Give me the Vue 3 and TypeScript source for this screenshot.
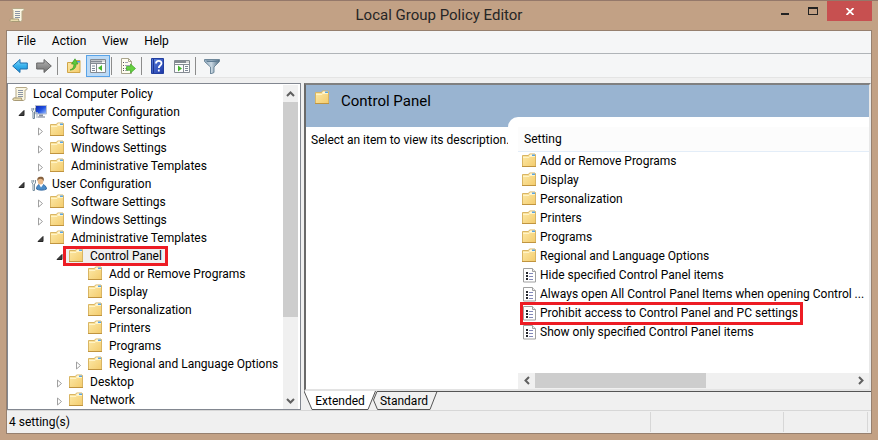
<script setup lang="ts">
import { ref } from 'vue'

interface TreeNode {
  label: string
  level: number
  icon: 'scroll' | 'computer' | 'user' | 'folder'
  state?: 'open' | 'closed'
  marked?: boolean
}

interface Setting {
  label: string
  icon: 'folder' | 'policy'
  marked?: boolean
}

const menus: string[] = ['File', 'Action', 'View', 'Help']

const nodes: TreeNode[] = [
  { label: 'Local Computer Policy', level: 0, icon: 'scroll' },
  { label: 'Computer Configuration', level: 1, icon: 'computer', state: 'open' },
  { label: 'Software Settings', level: 2, icon: 'folder', state: 'closed' },
  { label: 'Windows Settings', level: 2, icon: 'folder', state: 'closed' },
  { label: 'Administrative Templates', level: 2, icon: 'folder', state: 'closed' },
  { label: 'User Configuration', level: 1, icon: 'user', state: 'open' },
  { label: 'Software Settings', level: 2, icon: 'folder', state: 'closed' },
  { label: 'Windows Settings', level: 2, icon: 'folder', state: 'closed' },
  { label: 'Administrative Templates', level: 2, icon: 'folder', state: 'open' },
  { label: 'Control Panel', level: 3, icon: 'folder', state: 'open', marked: true },
  { label: 'Add or Remove Programs', level: 4, icon: 'folder' },
  { label: 'Display', level: 4, icon: 'folder' },
  { label: 'Personalization', level: 4, icon: 'folder' },
  { label: 'Printers', level: 4, icon: 'folder' },
  { label: 'Programs', level: 4, icon: 'folder' },
  { label: 'Regional and Language Options', level: 4, icon: 'folder', state: 'closed' },
  { label: 'Desktop', level: 3, icon: 'folder', state: 'closed' },
  { label: 'Network', level: 3, icon: 'folder', state: 'closed' },
]

const settings: Setting[] = [
  { label: 'Add or Remove Programs', icon: 'folder' },
  { label: 'Display', icon: 'folder' },
  { label: 'Personalization', icon: 'folder' },
  { label: 'Printers', icon: 'folder' },
  { label: 'Programs', icon: 'folder' },
  { label: 'Regional and Language Options', icon: 'folder' },
  { label: 'Hide specified Control Panel items', icon: 'policy' },
  { label: 'Always open All Control Panel Items when opening Control ...', icon: 'policy' },
  { label: 'Prohibit access to Control Panel and PC settings', icon: 'policy', marked: true },
  { label: 'Show only specified Control Panel items', icon: 'policy' },
]

const tab = ref<'extended' | 'standard'>('extended')
</script>

<template>
  <div class="window">
    <svg class="defs" width="0" height="0" aria-hidden="true">
      <defs>
        <linearGradient id="gFolder" x1="0" y1="0" x2="1" y2="1">
          <stop offset="0" stop-color="#fdeaa9" /><stop offset="1" stop-color="#f3cb6c" />
        </linearGradient>
        <linearGradient id="gBack" x1="0" y1="0" x2="0" y2="1">
          <stop offset="0" stop-color="#8fdcfb" /><stop offset="0.5" stop-color="#35b0ec" /><stop offset="1" stop-color="#1c8fd6" />
        </linearGradient>
        <linearGradient id="gFwd" x1="0" y1="0" x2="0" y2="1">
          <stop offset="0" stop-color="#b4b4b4" /><stop offset="1" stop-color="#6f6f6f" />
        </linearGradient>
        <linearGradient id="gHelp" x1="0" y1="0" x2="1" y2="1">
          <stop offset="0" stop-color="#5b83e0" /><stop offset="1" stop-color="#1c36a6" />
        </linearGradient>
        <linearGradient id="gScreen" x1="0" y1="0" x2="1" y2="1">
          <stop offset="0" stop-color="#0d22a8" /><stop offset="0.5" stop-color="#1f4fe0" /><stop offset="1" stop-color="#a6c8ff" />
        </linearGradient>
        <linearGradient id="gFunnel" x1="0" y1="0" x2="1" y2="0">
          <stop offset="0" stop-color="#8fa9bd" /><stop offset="0.45" stop-color="#c9d8e3" /><stop offset="1" stop-color="#4e6a80" />
        </linearGradient>
      </defs>
      <symbol id="folder" viewBox="0 0 16 16">
        <path d="M.5 13.500V2.500h6l1-1.500h5.500l.5 1v11.500z" fill="url(#gFolder)" stroke="#d9b563" />
        <path d="M8 1.500h5v2H7z" fill="#fff8dc" />
        <path d="M10 1.500h3v1.500h-3z" fill="#5aa5e4" />
        <path d="M1 4.500h6l1-1h5" fill="none" stroke="#fff3c6" />
        <path d="M0 13.500h14" stroke="#c0943f" />
      </symbol>
      <symbol id="scroll" viewBox="0 0 16 16">
        <path d="M4 1.500h10c1.500 0 1.500 2.500 0 2.500h-1v8.500c0 1.500-.8 2-2 2H2.500c-2 0-2-2.500 0-2.500H4V3.500c-1-1 0-2 0-2z" fill="#fbf7e4" stroke="#b5a988" />
        <path d="M2.500 12h7c0 1.500.5 2.500 1.500 2.500H2.500c-2 0-2-2.500 0-2.500z" fill="#e9dcae" stroke="#a89a76" />
        <path d="M6 4.500h5M6 6.500h5M6 8.500h5M6 10.500h5" stroke="#8b95a5" />
      </symbol>
      <symbol id="computer" viewBox="0 0 16 16">
        <path d="M4.500 1.500h11v8.500h-11z" fill="url(#gScreen)" stroke="#b9c0cd" />
        <path d="M8 10.500h4v2H8z" fill="#8790a0" /><path d="M7 13h7" stroke="#9aa2b0" stroke-width="1.500" />
        <path d="M1 4v3l1 1v6.500h1.500V8l1-1V4M2.700 4v2.500" fill="none" stroke="#71879a" />
        <path d="M6 8v6" stroke="#b9c4cf" stroke-width="1.500" />
      </symbol>
      <symbol id="user" viewBox="0 0 16 16">
        <path d="M5.500 13c0-3 2-5 4.500-5s5.500 2 5.500 5c-2 1.500-8 1.500-10 0z" fill="#4a8cc9" stroke="#3a6da3" />
        <path d="M8 8l2 3.500L12.500 8z" fill="#fff" />
        <ellipse cx="9.500" cy="5" rx="2.800" ry="3.600" fill="#e8b98a" />
        <path d="M6.500 5C5.500 1 8.500.5 10 .7c2.500 0 3.500 2 2.500 4.800-.2-2-1.500-2.800-3-2.800S7.200 3.500 6.500 5z" fill="#85603d" />
        <path d="M1 4v3l1 1v6.500h1.500V8l1-1V4M2.700 4v2.500" fill="none" stroke="#7b909f" />
      </symbol>
      <symbol id="policy" viewBox="0 0 16 16">
        <path d="M1.500 1.500h9l3 3v10.500h-12z" fill="#fff" stroke="#a0a0a0" />
        <path d="M10.500 1.500v3h3" fill="#eee" stroke="#a0a0a0" />
        <path d="M4 5h2v2H4zM4 8h2v2H4zM4 11h2v2H4z" fill="#26282e" />
        <path d="M7 6.500h4M7 9.500h4M7 12.500h4" stroke="#8389b8" />
      </symbol>
    </svg>

    <header class="titlebar">
      <svg class="app-icon" width="16" height="16"><use href="#scroll" /></svg>
      <h1>Local Group Policy Editor</h1>
      <div class="window-buttons">
        <button class="min" aria-label="Minimize"><svg width="8" height="2"><path d="M0 1h8" stroke="#222" stroke-width="2" /></svg></button>
        <button class="max" aria-label="Maximize"><svg width="10" height="8"><path d="M.5 0v8M9.500 0v8M0 7.500h10" stroke="#222" /><path d="M0 1h10" stroke="#222" stroke-width="2" /></svg></button>
        <button class="close" aria-label="Close"><svg width="8" height="7"><path d="M.5 0L7.500 7M7.500 0L.5 7" stroke="#fff" stroke-width="1.800" /></svg></button>
      </div>
    </header>

    <div class="client">
      <nav class="menubar">
        <button v-for="m in menus" :key="m">{{ m }}</button>
      </nav>

      <div class="toolbar">
        <button aria-label="Back">
          <svg width="16" height="16"><path d="M.7 8L8 1.500v3.500h7.300v6H8v3.500z" fill="url(#gBack)" stroke="#1b6fae" stroke-linejoin="round" /></svg>
        </button>
        <button aria-label="Forward">
          <svg width="16" height="16"><path d="M15.300 8L8 1.500v3.500H.7v6H8v3.500z" fill="url(#gFwd)" stroke="#666" stroke-linejoin="round" /></svg>
        </button>
        <i class="sep"></i>
        <button aria-label="Up one level">
          <svg width="16" height="16">
            <path d="M1.500 14.500v-10h6l1-2h5.500v12z" fill="url(#gFolder)" stroke="#d0a548" />
            <path d="M11 3h3v1.500h-3z" fill="#4c9be0" />
            <path d="M4 12c3-1 4-3 4-6H5.500L9 .8 12 6H10c0 4-2 6-6 6z" fill="#5fc93b" stroke="#3c9a25" stroke-width=".7" />
          </svg>
        </button>
        <button class="pressed" aria-label="Show/Hide Console Tree" aria-pressed="true">
          <svg width="16" height="16">
            <path d="M.5 1.500h15v13H.5z" fill="#fdfdfd" stroke="#858b93" /><path d="M1 3.500h11" stroke="#858b93" stroke-width="2" /><path d="M12.500 3h1M14.500 3h1" stroke="#666" />
            <path d="M.5 5.500h15M6.500 6v8" stroke="#858b93" /><path d="M2 8h3M2 10.500h3M2 12.500h3" stroke="#7d8896" />
            <path d="M12 7v6L8 10z" fill="#43b52d" />
          </svg>
        </button>
        <i class="sep"></i>
        <button aria-label="Export List">
          <svg width="16" height="16">
            <path d="M1.500.5h7l3 3v12h-10z" fill="#fffdf0" stroke="#a9a48d" /><path d="M8.500.5v3h3" fill="none" stroke="#a9a48d" />
            <path d="M3 4.500h1M3 7.500h1M3 10.500h1M3 12.500h1" stroke="#555" /><path d="M5 4.500h3M5 7.500h5M5 10.500h3M5 12.500h3" stroke="#a5a5b8" />
            <path d="M6.500 8.500h4V6l5 4.500-5 4.500v-2.800h-4z" fill="#65d13f" stroke="#3fa326" stroke-width=".7" />
          </svg>
        </button>
        <i class="sep"></i>
        <button aria-label="Help">
          <svg width="16" height="16">
            <path d="M1.500.5h12v15h-12z" fill="url(#gHelp)" stroke="#233f9f" /><path d="M3.500 1v14" stroke="#1e348d" />
            <path d="M6 5.500C6 2 11.500 2 11.500 5.300c0 2.300-2.700 2-2.700 4.700M8.800 11.500v2" fill="none" stroke="#fff" stroke-width="1.800" />
          </svg>
        </button>
        <button aria-label="Show/Hide Action Pane">
          <svg width="16" height="16">
            <path d="M.5 2.500h15v12H.5z" fill="#fdfdfd" stroke="#858b93" /><path d="M1 4h11" stroke="#858b93" stroke-width="2" /><path d="M12.500 4h1M14.500 4h1" stroke="#666" />
            <path d="M.5 6.500h15M9.500 7v7" stroke="#858b93" /><path d="M11 8.500h3M11 10.500h3M11 12.500h3" stroke="#7d8896" />
            <path d="M4 7.500v6l4-3z" fill="#43b52d" />
          </svg>
        </button>
        <i class="sep"></i>
        <button aria-label="Filter">
          <svg width="16" height="16">
            <path d="M.5 1.500h15v2L10 9v5.500L6.500 16V9L.5 3.500z" fill="url(#gFunnel)" stroke="#6f889b" stroke-linejoin="round" />
            <path d="M2 2.500h12l-1 1.500H3z" fill="#5f7c93" />
          </svg>
        </button>
      </div>

      <main class="body">
        <section class="tree-pane">
          <ul class="tree">
            <li v-for="(n, i) in nodes" :key="i" :class="'level-' + n.level">
              <svg class="twisty" width="7" height="9">
                <path v-if="n.state === 'closed'" d="M1.500 1v7l4-3.500z" fill="#fff" stroke="#a0a0a0" />
                <path v-else-if="n.state === 'open'" d="M6 1.500v5H1z" fill="#404040" stroke="#262626" />
              </svg>
              <button class="node" :class="{ marked: n.marked }">
                <svg width="16" height="16"><use :href="'#' + n.icon" /></svg>
                <span>{{ n.label }}</span>
              </button>
            </li>
          </ul>
          <div class="vscroll">
            <button aria-label="Scroll up"><svg width="9" height="6"><path d="M1 5l3.500-3.500L8 5" /></svg></button>
            <div class="vthumb"></div>
            <button aria-label="Scroll down"><svg width="9" height="6"><path d="M1 1l3.500 3.500L8 1" /></svg></button>
          </div>
        </section>

        <section class="result-pane">
          <div class="result-view">
            <div class="banner">
              <svg width="16" height="16"><use href="#folder" /></svg>
              <h2>Control Panel</h2>
            </div>
            <div class="columns">
              <p class="description">Select an item to view its description.</p>
              <div class="list-pane">
                <table>
                  <thead><tr><th scope="col">Setting</th></tr></thead>
                  <tbody>
                    <tr v-for="s in settings" :key="s.label">
                      <td>
                        <span class="setting" :class="{ marked: s.marked }">
                          <svg width="16" height="16"><use :href="'#' + s.icon" /></svg>
                          <span>{{ s.label }}</span>
                        </span>
                      </td>
                    </tr>
                  </tbody>
                </table>
                <div class="hscroll">
                  <button aria-label="Scroll left"><svg width="6" height="9"><path d="M5 1L1.500 4.500 5 8" /></svg></button>
                  <div class="htrack"><div class="hthumb"></div></div>
                  <button aria-label="Scroll right"><svg width="6" height="9"><path d="M1 1l3.500 3.500L1 8" /></svg></button>
                </div>
              </div>
            </div>
          </div>
          <div class="tabs" role="tablist">
            <button class="tab extended" role="tab" :aria-selected="tab === 'extended'" @click="tab = 'extended'">
              <svg width="72" height="19"><path d="M0 0l8 18.500h56L71.500 0" fill="#fff" stroke="#555" /></svg>
              <span>Extended</span>
            </button>
            <button class="tab standard" role="tab" :aria-selected="tab === 'standard'" @click="tab = 'standard'">
              <svg width="66" height="19"><path d="M5 .5L1.500 9l4 9.500H58L65 .5z" fill="#f0f0f0" stroke="#555" /></svg>
              <span>Standard</span>
            </button>
            <i class="tab-rule"></i>
          </div>
        </section>
      </main>

      <footer class="status">
        <span class="status-text">4 setting(s)</span>
        <span class="cell wide"></span>
        <span class="cell"></span>
      </footer>
    </div>
  </div>
</template>

<style>
body {
  margin: 0;
}
</style>

<style scoped>
* {
  box-sizing: border-box;
}
.window {
  display: flex;
  flex-direction: column;
  min-height: 100vh;
  padding: 0 6px 6px;
  background: #c2a185;
  border-top: 1px solid #94786a;
  font: 12px/18px Roboto, "Open Sans", sans-serif;
  color: #000;
}
.defs {
  position: absolute;
}
button {
  padding: 0;
  border: 0;
  background: none;
  font: inherit;
  color: inherit;
}
svg {
  display: block;
  flex: none;
}
.titlebar {
  display: grid;
  grid-template-columns: 1fr auto 1fr;
  height: 29px;
}
.app-icon {
  margin: 6px 0 0 3px;
}
h1 {
  margin: 0;
  font-size: 15px;
  line-height: 29px;
  font-weight: 400;
  color: #262626;
}
.window-buttons {
  display: flex;
  justify-content: flex-end;
}
.window-buttons button {
  display: flex;
  justify-content: center;
  width: 28px;
  height: 20px;
}
.window-buttons .min {
  padding-top: 12px;
}
.window-buttons .max {
  padding-top: 6px;
}
.window-buttons .close {
  align-items: center;
  width: 45px;
  background: #c75050;
}
.client {
  flex: 1;
  display: flex;
  flex-direction: column;
  border: 1px solid #96806f;
  background: #f0f0f0;
}
.menubar {
  display: flex;
  gap: 16px;
  height: 23px;
  padding: 0 10px 2px;
  background: #f5f6f7;
  border-bottom: 1px solid #b0b4b8;
}
.toolbar {
  display: flex;
  align-items: center;
  height: 24px;
  padding-left: 1px;
  background: #f5f6f7;
  border-bottom: 1px solid #e4e4e4;
}
.toolbar button {
  display: grid;
  place-items: center;
  width: 24px;
  height: 22px;
}
.toolbar .pressed {
  background: #bcdaf6;
  border: 1px solid #58a3e8;
}
.sep {
  width: 1px;
  height: 18px;
  margin: 0 4px 0 1px;
  background: #8c8c8c;
}
.body {
  flex: 1;
  display: flex;
  gap: 3px;
  padding-top: 5px;
}
.tree-pane {
  display: flex;
  flex: none;
  width: 294px;
  padding: 1px 1px 0;
  background: #fff;
  border: 1px solid #828790;
}
.tree {
  flex: 1;
  min-width: 0;
  margin: 0;
  padding: 0 0 0 3px;
  list-style: none;
}
.tree li {
  display: flex;
  align-items: center;
  height: 18px;
}
.level-0 .twisty { display: none; }
.level-1 { padding-left: 6px; }
.level-2 { padding-left: 25px; }
.level-3 { padding-left: 44px; }
.level-4 { padding-left: 63px; }
.twisty {
  margin-top: 3px;
}
.node {
  display: flex;
  align-items: center;
  gap: 5px;
  height: 18px;
  margin-left: 6px;
  white-space: nowrap;
}
.level-0 .node {
  margin-left: 0;
}
.node.marked {
  padding: 0 5px;
  margin-left: 1px;
  background: #f0f0f0;
  outline: 3px solid #ed1c24;
  outline-offset: -2px;
}
.vscroll {
  display: flex;
  flex-direction: column;
  flex: none;
  width: 16px;
  padding-right: 1px;
  background: #f0f0f0;
  background-clip: content-box;
}
.vscroll button,
.hscroll button {
  display: grid;
  place-items: center;
  flex: none;
  width: 15px;
  height: 17px;
}
.vscroll path,
.hscroll path {
  fill: none;
  stroke: #606060;
  stroke-width: 2;
}
.vthumb {
  flex: 1;
  margin-bottom: 75px;
  background: #cdcdcd;
}
.result-pane {
  flex: 1;
  display: flex;
  flex-direction: column;
  min-width: 0;
}
.result-view {
  flex: 1;
  display: flex;
  flex-direction: column;
  background: #fff;
  border: 2px solid #696969;
  border-top-color: #808080;
  border-right: 2px solid #e8e8e8;
  border-bottom: 2px solid #e3e3e3;
}
.banner {
  display: flex;
  gap: 10px;
  height: 42px;
  padding: 5px 9px 0;
  background: #99b4d1;
}
h2 {
  margin: 0;
  font-size: 15px;
  line-height: 22px;
  font-weight: 400;
}
.columns {
  flex: 1;
  display: flex;
}
.description {
  flex: none;
  width: 202px;
  margin: 0;
  padding: 4px 0 0 5px;
  white-space: nowrap;
}
.list-pane {
  flex: 1;
  display: flex;
  flex-direction: column;
  min-width: 0;
  margin-top: -10px;
  padding: 10px 0 0 10px;
  background: #fff;
  border-top-left-radius: 10px;
}
table {
  width: 100%;
  table-layout: fixed;
  border-collapse: collapse;
}
th {
  height: 24px;
  padding: 0 6px;
  background: #fcfcfc;
  border-bottom: 1px solid #e3edf8;
  font-weight: 400;
  text-align: left;
}
td {
  height: 19px;
  padding: 0 0 0 4px;
}
.setting {
  display: inline-flex;
  align-items: center;
  gap: 2px;
  height: 19px;
  padding-right: 3px;
  vertical-align: top;
  white-space: nowrap;
}
.setting.marked {
  outline: 3px solid #ed1c24;
  outline-offset: -1px;
}
.hscroll {
  display: flex;
  height: 16px;
  margin-top: auto;
  background: #f0f0f0;
}
.hscroll button {
  width: 17px;
  height: 15px;
}
.htrack {
  flex: 1;
}
.hthumb {
  width: 54%;
  height: 15px;
  background: #cdcdcd;
}
.tabs {
  display: flex;
  height: 19px;
}
.tab {
  position: relative;
  height: 19px;
}
.tab svg {
  position: absolute;
  top: 0;
  left: 0;
}
.tab span {
  position: relative;
}
.extended {
  z-index: 1;
  width: 72px;
  margin-right: -4px;
}
.standard {
  width: 64px;
}
.tab-rule {
  flex: 1;
  height: 1px;
  background: #555;
}
.status {
  display: flex;
  height: 23px;
  padding: 1px 3px 1px 2px;
  border-top: 1px solid #d7d7d7;
}
.status-text {
  flex: 1;
  line-height: 21px;
}
.cell {
  width: 85px;
  border-left: 1px solid #d7d7d7;
  border-right: 1px solid #d7d7d7;
}
.cell.wide {
  width: 133px;
  border-right: 0;
}
</style>
